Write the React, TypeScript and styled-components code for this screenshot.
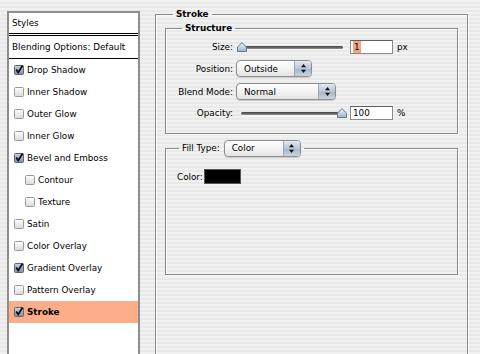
import React from 'react';
import styled, { createGlobalStyle } from 'styled-components';

const GlobalStyle = createGlobalStyle`
  html, body {
    margin: 0;
    padding: 0;
  }
  body {
    background: repeating-linear-gradient(to bottom, #f1f1f1 0, #f1f1f1 2px, #e9e9e9 2px, #e9e9e9 4px);
    font-family: "DejaVu Sans", "Lucida Grande", sans-serif;
    font-size: 8.8px;
    color: #000;
    overflow: hidden;
  }
`;

const Page = styled.div`
  display: flex;
  align-items: flex-start;
  width: 480px;
  height: 354px;
  overflow: hidden;
`;

const StylesPanel = styled.div`
  margin: 11px 0 0 7px;
  width: 133px;
  height: 360px;
  box-sizing: border-box;
  border: 2px solid #8e8e8e;
  border-bottom: none;
  background: #fff;
  display: flex;
  flex-direction: column;
`;

const PanelHeader = styled.div<{ $double?: boolean }>`
  height: ${(p) => (p.$double ? '20px' : '22px')};
  flex: none;
  display: flex;
  align-items: center;
  padding-left: 3px;
  border-bottom: ${(p) => (p.$double ? '3px double #000' : '1px solid #000')};
`;

const StyleRow = styled.div<{ $indent?: boolean; $active?: boolean }>`
  height: 22px;
  flex: none;
  display: flex;
  align-items: center;
  gap: 3px;
  padding-left: ${(p) => (p.$indent ? '16px' : '5px')};
  background: ${(p) => (p.$active ? '#fdae88' : 'transparent')};
  font-weight: ${(p) => (p.$active ? 'bold' : 'normal')};

  svg {
    flex: none;
  }
`;

const RightArea = styled.div`
  margin-left: 15px;
  width: 313px;
`;

const Group = styled.fieldset<{ $outer?: boolean }>`
  margin: 0;
  padding: ${(p) => (p.$outer ? '0 9px' : '0')};
  min-width: 0;
  border: 1px solid #8a8a8a;
  box-shadow: inset 1px 1px 0 rgba(255, 255, 255, 0.7), 1px 1px 0 rgba(255, 255, 255, 0.7);
`;

const OuterGroup = styled(Group)`
  margin-top: 8px;
  height: 400px;
`;

const StructureGroup = styled(Group)`
  margin-top: 2px;
`;

const FillGroup = styled(Group)`
  margin-top: 6px;
`;

const Legend = styled.legend<{ $shift: number }>`
  margin-left: ${(p) => p.$shift}px;
  padding: 0 3px;
  line-height: 12px;
  font-weight: bold;
`;

const FillLegend = styled.legend`
  margin-left: 13px;
  padding: 0 3px;
  display: flex;
  align-items: center;
  gap: 4px;
  height: 16px;
`;

const FieldRows = styled.div`
  display: flex;
  flex-direction: column;
  gap: 6px;
  padding: 6px 0 13px 0;
`;

const FieldRow = styled.div<{ $h: number }>`
  display: grid;
  grid-template-columns: 67px auto;
  column-gap: 3px;
  align-items: center;
  height: ${(p) => p.$h}px;
`;

const FieldLabel = styled.span`
  text-align: right;
  white-space: nowrap;
`;

const Controls = styled.div`
  display: flex;
  align-items: center;
`;

const SliderBox = styled.div`
  position: relative;
  width: 110px;
  height: 14px;
  margin-left: 1px;
  display: flex;
  align-items: center;
`;

const Track = styled.div`
  flex: 1;
  height: 3px;
  margin: 0 4px;
  border-radius: 2px;
  background: linear-gradient(to bottom, #3f3f3f, #8f8f8f);
  box-shadow: 0 1px 0 rgba(255, 255, 255, 0.8);
`;

const Thumb = styled.svg`
  position: absolute;
  top: 2px;
`;

const NumberBox = styled.div`
  width: 43px;
  height: 14px;
  box-sizing: border-box;
  margin-left: 3px;
  border: 1px solid #8a8a8a;
  border-top-color: #5e5e5e;
  background: #fff;
  padding-left: 2px;
  display: flex;
  align-items: center;
  line-height: 12px;
`;

const Selected = styled.span`
  background: #f8a37f;
  padding: 0 1px;
`;

const Unit = styled.span`
  margin-left: 4px;
`;

const Popup = styled.div<{ $w: number }>`
  width: ${(p) => p.$w}px;
  height: 17px;
  box-sizing: border-box;
  border: 1px solid #8d8d8d;
  border-radius: 4px;
  background: linear-gradient(to bottom, #ffffff 0%, #f3f3f3 50%, #e4e4e4 100%);
  display: flex;
  align-items: center;
  overflow: hidden;
  box-shadow: 0 1px 1px rgba(0, 0, 0, 0.15);
  font-weight: normal;
`;

const PopupText = styled.span`
  flex: 1;
  padding-left: 7px;
`;

const PopupArrows = styled.div`
  width: 16px;
  height: 100%;
  border-left: 1px solid #9aa7b8;
  background: linear-gradient(to bottom, #e3e9f1 0%, #b9c6d6 50%, #a4b4c8 51%, #c9d4e2 100%);
  display: flex;
  align-items: center;
  justify-content: center;
`;

const FillBody = styled.div`
  height: 118px;
  padding: 13px 0 0 11px;
  box-sizing: border-box;
`;

const ColorRow = styled.div`
  display: flex;
  align-items: center;
  gap: 1px;
`;

const Swatch = styled.div`
  width: 37px;
  height: 15px;
  box-sizing: border-box;
  background: #000;
  border: 1px solid #555;
`;

const CheckBox: React.FC<{ checked: boolean }> = ({ checked }) => (
  <svg width="10" height="10" viewBox="0 0 10 10">
    <defs>
      <linearGradient id="cbOff" x1="0" y1="0" x2="0" y2="1">
        <stop offset="0" stopColor="#ffffff" />
        <stop offset="1" stopColor="#d9d9d9" />
      </linearGradient>
      <linearGradient id="cbOn" x1="0" y1="0" x2="0" y2="1">
        <stop offset="0" stopColor="#c9d3e0" />
        <stop offset="1" stopColor="#7d8ea6" />
      </linearGradient>
    </defs>
    <rect
      x="0.5"
      y="0.5"
      width="9"
      height="9"
      rx="1"
      fill={checked ? 'url(#cbOn)' : 'url(#cbOff)'}
      stroke={checked ? '#5d6675' : '#9a9a9a'}
    />
    {checked && <path d="M2.2 4.6 L4.2 7.4 L8.6 0.6" stroke="#0c0c0c" strokeWidth="1.8" fill="none" />}
  </svg>
);

const Arrows: React.FC = () => (
  <svg width="7" height="11" viewBox="0 0 7 11">
    <path d="M3.5 1 L6 4.3 H1 Z" fill="#111" />
    <path d="M1 6.7 H6 L3.5 10 Z" fill="#111" />
  </svg>
);

const PopupButton: React.FC<{ label: string; width: number }> = ({ label, width }) => (
  <Popup $w={width}>
    <PopupText>{label}</PopupText>
    <PopupArrows>
      <Arrows />
    </PopupArrows>
  </Popup>
);

const Slider: React.FC<{ value: number }> = ({ value }) => (
  <SliderBox>
    <Track />
    <Thumb width="10" height="10" viewBox="0 0 10 10" style={{ left: (value / 100) * 100 }}>
      <defs>
        <linearGradient id="thumbFill" x1="0" y1="0" x2="0" y2="1">
          <stop offset="0" stopColor="#f1f5fa" />
          <stop offset="1" stopColor="#9fb1c6" />
        </linearGradient>
      </defs>
      <path d="M0.5 9.5 V5 L5 0.7 L9.5 5 V9.5 Z" fill="url(#thumbFill)" stroke="#66788e" />
    </Thumb>
  </SliderBox>
);

const styleItems = [
  { label: 'Drop Shadow', checked: true },
  { label: 'Inner Shadow', checked: false },
  { label: 'Outer Glow', checked: false },
  { label: 'Inner Glow', checked: false },
  { label: 'Bevel and Emboss', checked: true },
  { label: 'Contour', checked: false, indent: true },
  { label: 'Texture', checked: false, indent: true },
  { label: 'Satin', checked: false },
  { label: 'Color Overlay', checked: false },
  { label: 'Gradient Overlay', checked: true },
  { label: 'Pattern Overlay', checked: false },
  { label: 'Stroke', checked: true, active: true },
];

const App: React.FC = () => {
  return (
    <>
      <GlobalStyle />
      <Page>
        <StylesPanel>
          <PanelHeader $double>Styles</PanelHeader>
          <PanelHeader>Blending Options: Default</PanelHeader>
          {styleItems.map((item) => (
            <StyleRow key={item.label} $indent={item.indent} $active={item.active}>
              <CheckBox checked={item.checked} />
              <span>{item.label}</span>
            </StyleRow>
          ))}
        </StylesPanel>

        <RightArea>
          <OuterGroup $outer>
            <Legend $shift={8}>Stroke</Legend>
            <StructureGroup>
              <Legend $shift={16}>Structure</Legend>
              <FieldRows>
                <FieldRow $h={14}>
                  <FieldLabel>Size:</FieldLabel>
                  <Controls>
                    <Slider value={0} />
                    <NumberBox>
                      <Selected>1</Selected>
                    </NumberBox>
                    <Unit>px</Unit>
                  </Controls>
                </FieldRow>
                <FieldRow $h={17}>
                  <FieldLabel>Position:</FieldLabel>
                  <Controls>
                    <PopupButton label="Outside" width={76} />
                  </Controls>
                </FieldRow>
                <FieldRow $h={17}>
                  <FieldLabel>Blend Mode:</FieldLabel>
                  <Controls>
                    <PopupButton label="Normal" width={100} />
                  </Controls>
                </FieldRow>
                <FieldRow $h={14}>
                  <FieldLabel>Opacity:</FieldLabel>
                  <Controls>
                    <Slider value={100} />
                    <NumberBox>100</NumberBox>
                    <Unit>%</Unit>
                  </Controls>
                </FieldRow>
              </FieldRows>
            </StructureGroup>

            <FillGroup>
              <FillLegend>
                <span>Fill Type:</span>
                <PopupButton label="Color" width={77} />
              </FillLegend>
              <FillBody>
                <ColorRow>
                  <span>Color:</span>
                  <Swatch />
                </ColorRow>
              </FillBody>
            </FillGroup>
          </OuterGroup>
        </RightArea>
      </Page>
    </>
  );
};

export default App;
